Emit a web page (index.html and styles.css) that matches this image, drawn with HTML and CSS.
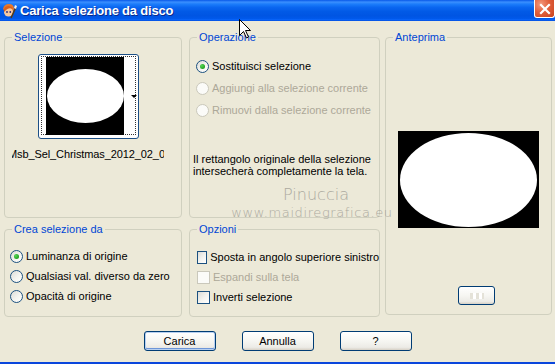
FILE: index.html
```html
<!DOCTYPE html>
<html lang="it">
<head>
    <meta charset="UTF-8">
    <meta name="viewport" content="width=device-width, initial-scale=1.0">
    <title>Carica selezione da disco</title>
    <link rel="stylesheet" href="styles.css">
</head>
<body>
    <div class="window">
        <div class="titlebar">
            <svg class="app-icon" width="16" height="16" viewBox="0 0 16 16">
                <path d="M2 6 Q3 1 8 1 Q13 1 13 6 L12 9 Q9 4 4 8 Z" fill="#e8782a"/>
                <circle cx="7.5" cy="9" r="4.5" fill="#f6c9a0"/>
                <path d="M3 9 Q2 4 7 3 Q11 3 12 6 Q8 4 5 7 Z" fill="#d9601c"/>
                <circle cx="6" cy="9" r="0.9" fill="#2a2a7a"/>
                <circle cx="9.3" cy="9" r="0.9" fill="#2a2a7a"/>
                <path d="M10 15 L15 4" stroke="#5a3a10" stroke-width="1.5"/>
                <path d="M14 2 L16 3 L15 6 L13 5 Z" fill="#f0f0f0"/>
            </svg>
            <span class="title">Carica selezione da disco</span>
            <div class="close-btn">
                <svg width="12" height="12" viewBox="0 0 12 12">
                    <path d="M2 2 L10 10 M10 2 L2 10" stroke="#fff" stroke-width="2.2" stroke-linecap="square"/>
                </svg>
            </div>
        </div>

        <div class="dialog">
            <div class="groups">
                <fieldset class="group sel-group">
                    <legend>Selezione</legend>
                    <div class="thumb-btn">
                        <div class="thumb-focus"></div>
                        <div class="thumb-img"><div class="blob"></div></div>
                        <span class="drop-arrow"></span>
                    </div>
                    <div class="file-name"><span>Msb_Sel_Christmas_2012_02_03</span></div>
                </fieldset>

                <fieldset class="group op-group">
                    <legend>Operazione</legend>
                    <div class="choices op-choices">
                        <div class="choice"><span class="radio checked"></span>Sostituisci selezione</div>
                        <div class="choice disabled"><span class="radio"></span>Aggiungi alla selezione corrente</div>
                        <div class="choice disabled"><span class="radio"></span>Rimuovi dalla selezione corrente</div>
                    </div>
                    <p class="note">Il rettangolo originale della selezione<br>intersecherà completamente la tela.</p>
                </fieldset>

                <fieldset class="group preview-group">
                    <legend>Anteprima</legend>
                    <div class="preview-img"><div class="blob"></div></div>
                    <div class="xp-btn small-btn"><span class="ghost"></span></div>
                </fieldset>

                <fieldset class="group create-group">
                    <legend>Crea selezione da</legend>
                    <div class="choices create-choices">
                        <div class="choice"><span class="radio checked"></span>Luminanza di origine</div>
                        <div class="choice"><span class="radio"></span>Qualsiasi val. diverso da zero</div>
                        <div class="choice"><span class="radio"></span>Opacità di origine</div>
                    </div>
                </fieldset>

                <fieldset class="group options-group">
                    <legend>Opzioni</legend>
                    <div class="choices opt-choices">
                        <div class="choice"><span class="check"></span>Sposta in angolo superiore sinistro</div>
                        <div class="choice disabled"><span class="check"></span>Espandi sulla tela</div>
                        <div class="choice"><span class="check"></span>Inverti selezione</div>
                    </div>
                </fieldset>
            </div>

            <div class="buttons">
                <div class="xp-btn default">Carica</div>
                <div class="xp-btn">Annulla</div>
                <div class="xp-btn">?</div>
            </div>
        </div>

        <div class="watermark">
            <span class="wm-name">Pinuccia</span>
            <span class="wm-site">www.maidiregrafica.eu</span>
        </div>

        <svg class="cursor" width="13" height="20" viewBox="0 0 13 20">
            <path d="M0.5 0.5 L0.5 16.5 L4.5 12.5 L7.5 19 L9.5 18 L6.5 11.5 L11.5 11.5 Z" fill="#fff" stroke="#000" stroke-width="1"/>
        </svg>
    </div>
</body>
</html>
```

FILE: styles.css
```css
body {
    margin: 0;
    background: #ece9d8;
    font-family: 'Liberation Sans', Arial, sans-serif;
    font-size: 11px;
    color: #000;
}

.window {
    position: relative;
    width: 555px;
    height: 364px;
    box-sizing: border-box;
    border-bottom: 2px solid #0a46dc;
    background: #ece9d8;
    overflow: hidden;
}

.titlebar {
    display: flex;
    align-items: center;
    height: 21px;
    background: linear-gradient(to bottom, #0858e8 0%, #3a8ffe 10%, #1b7cfa 20%, #0a66f0 35%, #025ae6 55%, #0055e3 75%, #0058ea 88%, #0b66fb 95%, #0048d8 100%);
}

.app-icon {
    margin: 1px 3px 0 1px;
}

.title {
    color: #fff;
    font-weight: bold;
    font-size: 13px;
    letter-spacing: -0.2px;
    text-shadow: 1px 1px 0 #0a2a8a;
}

.close-btn {
    margin-left: auto;
    align-self: flex-start;
    width: 19px;
    height: 17px;
    border: 1px solid #fff;
    border-top: none;
    border-radius: 0 0 3px 3px;
    background: radial-gradient(circle at 30% 25%, #f39a7e 0%, #e2603c 45%, #c7411d 100%);
    display: flex;
    justify-content: center;
    align-items: center;
}

.dialog {
    padding: 10px 0 0 4px;
}

.groups {
    display: grid;
    grid-template-columns: 178px 193px 167px;
    grid-template-rows: 187px 94px;
    column-gap: 5px;
    row-gap: 5px;
}

.group {
    margin: 0;
    padding: 0;
    min-width: 0;
    border: 1px solid #d0d0bf;
    border-radius: 4px;
    box-sizing: border-box;
}

.group legend {
    margin-left: 7px;
    padding: 0 2px;
    line-height: 13px;
    color: #0046d5;
}

.sel-group { grid-column: 1; grid-row: 1; }
.op-group { grid-column: 2; grid-row: 1; margin-left: 2px; }
.preview-group { grid-column: 3; grid-row: 1 / 3; margin-bottom: 2px; }
.create-group { grid-column: 1; grid-row: 2; }
.options-group { grid-column: 2; grid-row: 2; margin-left: 2px; }

/* selection thumbnail */
.thumb-btn {
    position: relative;
    width: 101px;
    height: 85px;
    margin: 10px 0 0 33px;
    box-sizing: border-box;
    border: 1px solid #1c4f86;
    border-radius: 3px;
    background: #fff;
}

.thumb-focus {
    position: absolute;
    inset: 1px 2px 3px 2px;
    border: 1px dotted #333;
}

.thumb-img {
    position: absolute;
    left: 7px;
    top: 2px;
    width: 78px;
    height: 78px;
    background: #000;
    display: flex;
    align-items: center;
}

.thumb-img .blob {
    width: 77px;
    height: 54px;
    margin-left: 1px;
}

.blob {
    background: #fff;
    border-radius: 50%;
}

.drop-arrow {
    position: absolute;
    left: 92px;
    top: 40px;
    border-left: 3px solid transparent;
    border-right: 3px solid transparent;
    border-top: 3px solid #000;
}

.file-name {
    width: 152px;
    margin: 9px 0 0 7px;
    overflow: hidden;
    white-space: nowrap;
    line-height: 13px;
}

.file-name span {
    display: inline-block;
    margin-left: -4px;
    letter-spacing: -0.1px;
}

/* radios and checkboxes */
.choice {
    display: flex;
    align-items: center;
    gap: 3px;
    white-space: nowrap;
}

.choice.disabled {
    color: #aca899;
}

.radio {
    width: 13px;
    height: 13px;
    box-sizing: border-box;
    border: 1px solid #1c5180;
    border-radius: 50%;
    background: linear-gradient(135deg, #dcdcd7 0%, #f4f4f0 55%, #fff 100%);
    display: flex;
    justify-content: center;
    align-items: center;
}

.radio.checked::after {
    content: '';
    width: 5px;
    height: 5px;
    border-radius: 50%;
    background: radial-gradient(circle at 35% 35%, #55d655 0%, #21a121 70%);
}

.disabled .radio,
.disabled .check {
    border-color: #cac8bb;
    background: #fbfbf8;
}

.check {
    width: 13px;
    height: 13px;
    box-sizing: border-box;
    border: 1px solid #1c5180;
    background: linear-gradient(135deg, #dcdcd7 0%, #f4f4f0 55%, #fff 100%);
}

.op-choices {
    margin: 11px 0 0 6px;
}

.op-choices .choice {
    height: 22px;
}

.note {
    margin: 32px 0 0 3px;
    line-height: 12px;
}

.create-choices {
    margin: 10px 0 0 5px;
}

.create-choices .choice {
    height: 20px;
}

.opt-choices {
    margin: 11px 0 0 7px;
}

.opt-choices .choice {
    height: 20px;
}

/* preview */
.preview-img {
    width: 141px;
    height: 97px;
    margin: 87px 0 0 12px;
    background: #000;
    display: flex;
    justify-content: center;
    align-items: center;
}

.preview-img .blob {
    width: 137px;
    height: 94px;
}

/* buttons */
.xp-btn {
    width: 72px;
    height: 20px;
    box-sizing: border-box;
    border: 1px solid #003c74;
    border-radius: 3px;
    background: linear-gradient(to bottom, #ffffff 0%, #f6f6f2 50%, #ecebe6 85%, #d6d0c5 100%);
    display: flex;
    justify-content: center;
    align-items: center;
}

.xp-btn.default {
    box-shadow: inset 0 0 0 1px #b8d0f0, inset 0 -1px 0 1px #6e96d8;
}

.small-btn {
    width: 37px;
    height: 19px;
    margin: 58px 0 0 72px;
}

.ghost {
    width: 14px;
    height: 6px;
    background: repeating-linear-gradient(to right, #e4e2d8 0 3px, #fff 3px 6px);
}

.buttons {
    display: flex;
    justify-content: center;
    gap: 26px;
    margin: 14px 0 0 -4px;
}

/* overlays */
.watermark {
    position: absolute;
    left: 252px;
    top: 185px;
    width: 120px;
    display: flex;
    flex-direction: column;
    align-items: center;
    color: #9c9a92;
    font-family: 'DejaVu Sans', sans-serif;
    font-stretch: condensed;
    font-weight: 300;
    opacity: 0.8;
    pointer-events: none;
}

.wm-name {
    font-size: 16px;
    line-height: 20px;
    margin-left: 8px;
}

.wm-site {
    font-size: 13px;
    line-height: 16px;
    letter-spacing: 0.6px;
}

.cursor {
    position: absolute;
    left: 239px;
    top: 19px;
}
```
